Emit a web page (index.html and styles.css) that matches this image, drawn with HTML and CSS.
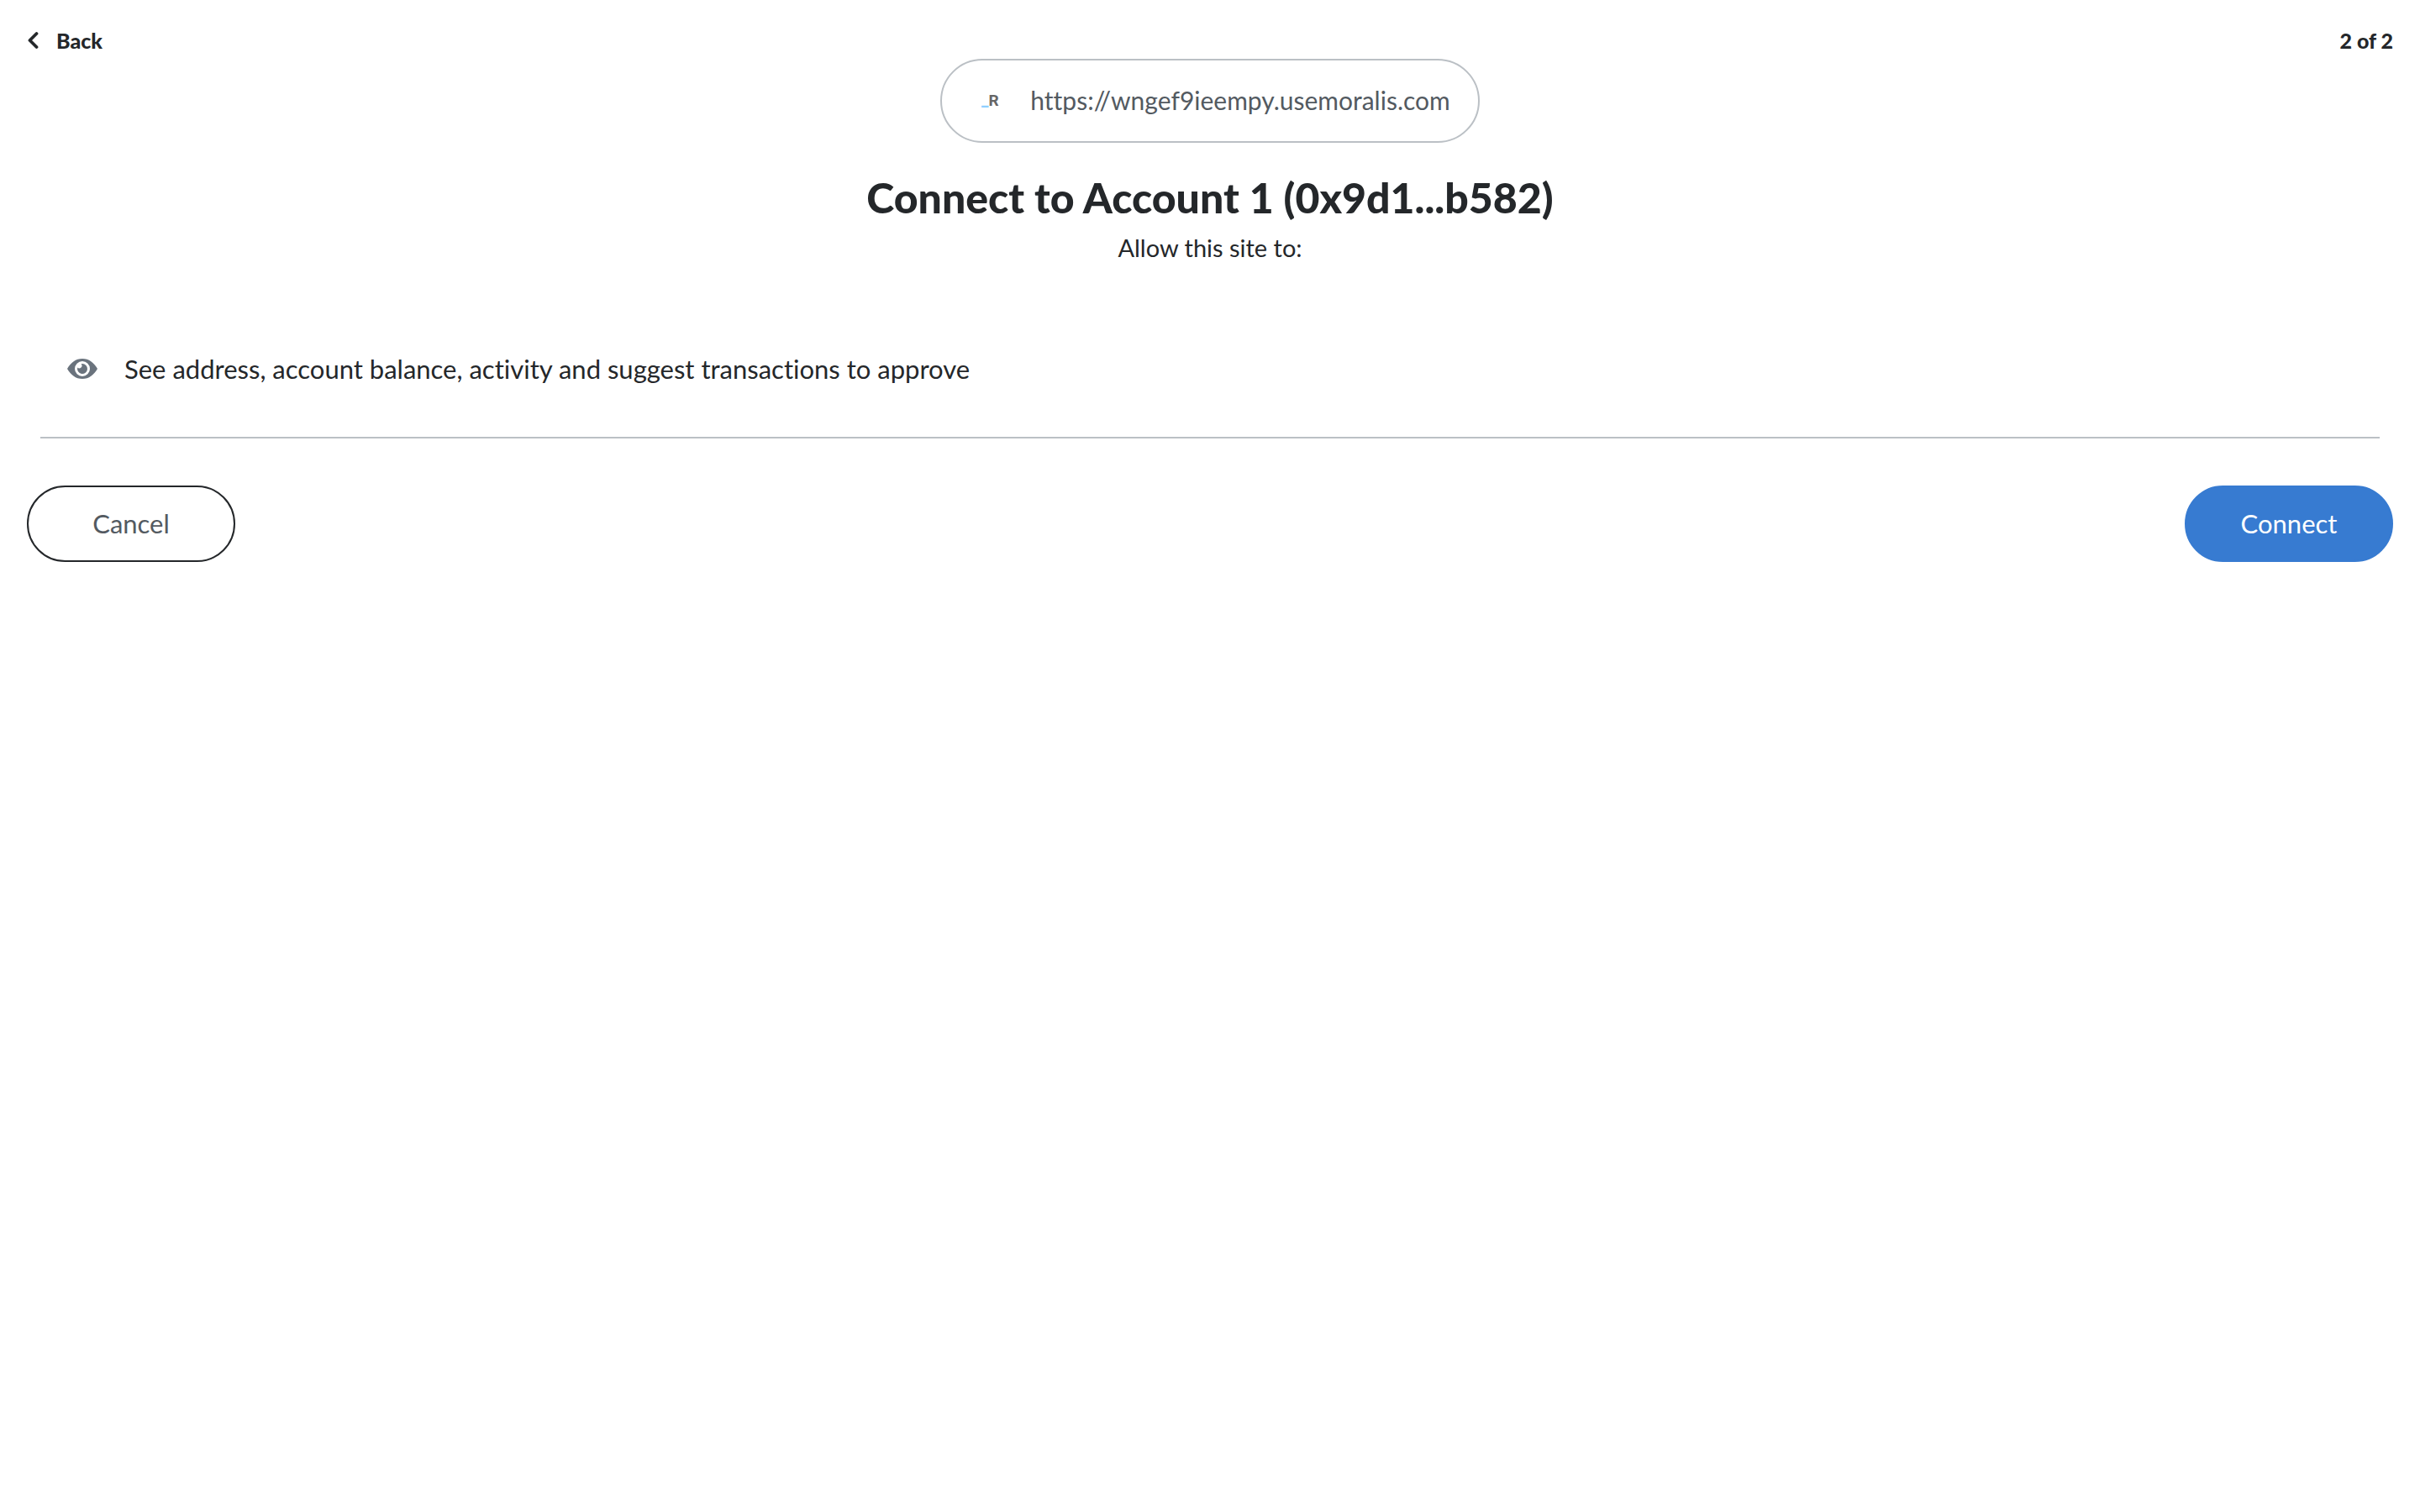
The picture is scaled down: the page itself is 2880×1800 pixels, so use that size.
FILE: index.html
```html
<!DOCTYPE html>
<html lang="en">
<head>
<meta charset="utf-8">
<title>Connect to Account 1</title>
<link rel="stylesheet" href="styles.css">
</head>
<body>
<header class="topbar">
  <button class="back" type="button">
    <svg class="back-icon" viewBox="0 0 14 22" aria-hidden="true"><path d="M11.500 3 3.500 11l8 8" fill="none" stroke="currentColor" stroke-width="3.800" stroke-linecap="round" stroke-linejoin="round"/></svg>
    <span>Back</span>
  </button>
  <span class="step">2 of 2</span>
</header>
<main class="content">
  <div class="origin">
    <span class="favicon"><span class="favicon-mark">_</span>R</span>
    <span>https://wngef9ieempy.usemoralis.com</span>
  </div>
  <h1 class="title">Connect to Account 1 (0x9d1...b582)</h1>
  <p class="subtitle">Allow this site to:</p>
  <ul class="permissions">
    <li class="permission">
      <svg class="eye" viewBox="0 0 36 24" aria-hidden="true"><path fill="currentColor" fill-rule="evenodd" d="M18 0C10 0 4.500 4.500 0 12c4.500 7.500 10 12 18 12s13.500-4.500 18-12C31.500 4.500 26 0 18 0Zm0 3a9 9 0 1 1 0 18 9 9 0 0 1 0-18Z"/><path fill="currentColor" d="M18 6a6 6 0 1 1-5.800 4.500 3 3 0 0 0 4.300-4.300A6 6 0 0 1 18 6Z"/></svg>
      <span>See address, account balance, activity and suggest transactions to approve</span>
    </li>
  </ul>
</main>
<footer class="actions">
  <button class="button button-cancel" type="button">Cancel</button>
  <button class="button button-connect" type="button">Connect</button>
</footer>
</body>
</html>
```
FILE: styles.css
```css
* {
  box-sizing: border-box;
}

body {
  margin: 0;
  padding: 30px 32px;
  background: #fff;
  color: #24272a;
  font-family: Lato, "Liberation Sans", sans-serif;
  font-size: 31px;
  font-variant-ligatures: none;
  line-height: 40px;
}

button {
  font: inherit;
  cursor: pointer;
}

.topbar {
  display: flex;
  justify-content: space-between;
  align-items: center;
  height: 36px;
  font-size: 25px;
  font-weight: 900;
}

.back {
  display: flex;
  align-items: center;
  gap: 21px;
  padding: 0;
  border: 0;
  background: none;
  color: inherit;
}

.back-icon {
  width: 14px;
  height: 22px;
}

.content {
  display: flex;
  flex-direction: column;
  align-items: center;
  padding: 4px 16px 0;
}

.origin {
  display: flex;
  align-items: center;
  gap: 24px;
  height: 100px;
  padding: 0 33px 2px;
  border: 2px solid #bbc0c5;
  border-radius: 50px;
  color: #535a61;
  font-size: 30px;
}

.favicon {
  width: 48px;
  padding-top: 2px;
  text-align: center;
  color: #666;
  font-family: Roboto, sans-serif;
  font-size: 19px;
  font-weight: 700;
}

.favicon-mark {
  color: #8fd0ff;
  font-weight: 900;
}

.title {
  margin: 31px 0 0;
  font-size: 50px;
  font-weight: 900;
  line-height: 68px;
}

.subtitle {
  margin: 6px 0 0;
  font-size: 29px;
}

.permissions {
  align-self: stretch;
  margin: 80px 0 0;
  padding: 24px 32px 61px;
  border-bottom: 2px solid #bbc0c5;
  list-style: none;
}

.permission {
  display: flex;
  align-items: center;
  gap: 32px;
}

.eye {
  width: 36px;
  height: 24px;
  color: #6a737d;
}

.actions {
  display: flex;
  justify-content: space-between;
  padding-top: 56px;
}

.button {
  width: 248px;
  height: 91px;
  padding: 0 0 2px;
  border: 2px solid #24272a;
  border-radius: 46px;
}

.button-cancel {
  background: #fff;
  color: #535a61;
}

.button-connect {
  border-color: #377bd1;
  background: #377bd1;
  color: #fff;
}
```
